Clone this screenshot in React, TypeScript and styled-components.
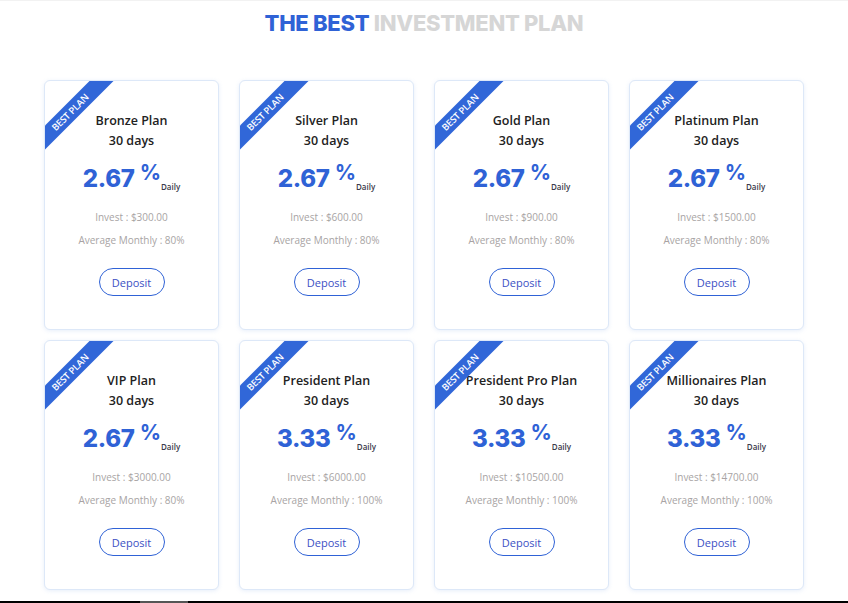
import * as React from "react";
import styled, { createGlobalStyle } from "styled-components";

const GlobalStyle = createGlobalStyle`
    html, body {
        margin: 0;
        padding: 0;
        background: #ffffff;
        font-family: "Open Sans", "Liberation Sans", sans-serif;
    }
`;

const BLUE = "#2f62d6";

const Page = styled.div`
    height: 601px;
    border-top: 1px solid #f2f2f2;
    box-sizing: border-box;
    display: flex;
    flex-direction: column;
    align-items: center;
`;

const Heading = styled.h2`
    margin: 10px 0 0 0;
    font-family: Inter, "Open Sans", sans-serif;
    font-size: 22px;
    font-weight: 800;
    line-height: 24px;
    letter-spacing: -0.3px;
    color: #d6d6d6;
    span {
        color: ${BLUE};
    }
`;

const Grid = styled.div`
    margin-top: 45px;
    display: grid;
    grid-template-columns: repeat(4, 175px);
    grid-auto-rows: 250px;
    column-gap: 20px;
    row-gap: 10px;
`;

const Card = styled.div`
    position: relative;
    overflow: hidden;
    box-sizing: border-box;
    border: 1px solid #dde8f8;
    border-radius: 6px;
    box-shadow: 0 1px 4px rgba(120, 160, 230, 0.18);
    background: #fff;
    display: flex;
    flex-direction: column;
    align-items: center;
    padding-top: 30px;
`;

const Ribbon = styled.div`
    position: absolute;
    left: -32px;
    top: 20px;
    width: 120px;
    height: 17px;
    background: #3167d8;
    transform: rotate(-45deg);
    color: #fff;
    font-size: 9.5px;
    line-height: 17px;
    text-align: center;
    text-transform: uppercase;
    font-weight: 600;
    letter-spacing: -0.2px;
    text-indent: -8px;
`;

const PlanName = styled.div`
    font-size: 12.5px;
    font-weight: 600;
    color: #222;
    line-height: 20px;
`;

const Rate = styled.div`
    margin-top: 10px;
    display: flex;
    align-items: flex-start;
    height: 36px;
`;

const Value = styled.span`
    font-family: Inter, "Open Sans", sans-serif;
    font-size: 24px;
    font-weight: 800;
    color: ${BLUE};
    line-height: 36px;
    letter-spacing: -0.3px;
`;

const Percent = styled.span`
    font-family: Inter, "Open Sans", sans-serif;
    font-size: 21px;
    font-weight: 700;
    color: ${BLUE};
    line-height: 24px;
    margin-left: 5px;
`;

const Daily = styled.span`
    align-self: flex-end;
    font-size: 8px;
    font-weight: 600;
    color: #3a3a4a;
    margin-left: 0;
    margin-bottom: 5px;
`;

const Info = styled.div<{ $gap: number }>`
    margin-top: ${p => p.$gap}px;
    font-size: 10px;
    color: #a8a4a4;
    line-height: 14px;
`;

const DepositButton = styled.button`
    margin-top: 21px;
    width: 66px;
    height: 28px;
    border: 1px solid ${BLUE};
    border-radius: 14px;
    background: #fff;
    color: #3b4fc4;
    font-family: "Open Sans", sans-serif;
    font-size: 11px;
    cursor: pointer;
    padding: 0;
`;

const BottomRule = styled.div`
    height: 2px;
    background: #000;
    position: relative;
    span {
        position: absolute;
        left: 140px;
        width: 48px;
        top: 0;
        height: 2px;
        background: #555;
    }
`;

type Plan = { name: string; rate: string; invest: string; monthly: string };

const plans: Plan[] = [
    { name: "Bronze Plan", rate: "2.67", invest: "$300.00", monthly: "80%" },
    { name: "Silver Plan", rate: "2.67", invest: "$600.00", monthly: "80%" },
    { name: "Gold Plan", rate: "2.67", invest: "$900.00", monthly: "80%" },
    { name: "Platinum Plan", rate: "2.67", invest: "$1500.00", monthly: "80%" },
    { name: "VIP Plan", rate: "2.67", invest: "$3000.00", monthly: "80%" },
    { name: "President Plan", rate: "3.33", invest: "$6000.00", monthly: "100%" },
    { name: "President Pro Plan", rate: "3.33", invest: "$10500.00", monthly: "100%" },
    { name: "Millionaires Plan", rate: "3.33", invest: "$14700.00", monthly: "100%" },
];

const PlanCard = ({ plan }: { plan: Plan }): JSX.Element => (
    <Card>
        <Ribbon>Best Plan</Ribbon>
        <PlanName>{plan.name}</PlanName>
        <PlanName>30 days</PlanName>
        <Rate>
            <Value>{plan.rate}</Value>
            <Percent>%</Percent>
            <Daily>Daily</Daily>
        </Rate>
        <Info $gap={13}>Invest : {plan.invest}</Info>
        <Info $gap={9}>Average Monthly : {plan.monthly}</Info>
        <DepositButton>Deposit</DepositButton>
    </Card>
);

const App = (): JSX.Element => {
    return (
        <>
            <GlobalStyle />
            <Page>
                <Heading>
                    <span>THE BEST</span> INVESTMENT PLAN
                </Heading>
                <Grid>
                    {plans.map(p => (
                        <PlanCard key={p.name} plan={p} />
                    ))}
                </Grid>
            </Page>
            <BottomRule>
                <span />
            </BottomRule>
        </>
    );
};

export default App;
